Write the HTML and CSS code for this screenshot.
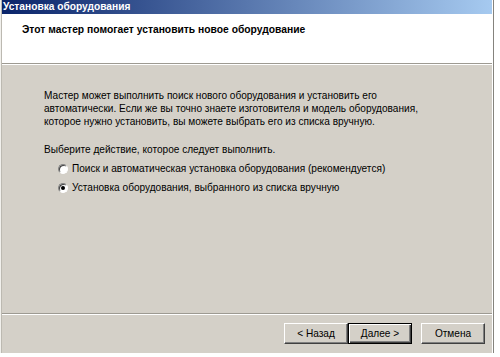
FILE: index.html
```html
<!DOCTYPE html>
<html lang="ru">
<head>
    <meta charset="UTF-8">
    <title>Установка оборудования</title>
    <link rel="stylesheet" href="styles.css">
</head>
<body>
    <div class="dialog">
        <div class="titlebar">Установка оборудования</div>
        <div class="header">
            <h1>Этот мастер помогает установить новое оборудование</h1>
        </div>
        <div class="sep"></div>
        <div class="content">
            <p class="intro">Мастер может выполнить поиск нового оборудования и установить его<br>
                автоматически. Если же вы точно знаете изготовителя и модель оборудования,<br>
                которое нужно установить, вы можете выбрать его из списка вручную.</p>
            <p class="ask">Выберите действие, которое следует выполнить.</p>
            <div class="radio"><span class="circle"></span>Поиск и автоматическая установка оборудования (рекомендуется)</div>
            <div class="radio"><span class="circle checked"></span>Установка оборудования, выбранного из списка вручную</div>
        </div>
        <div class="sep"></div>
        <div class="buttons">
            <button class="btn">&lt; Назад</button>
            <button class="btn default">Далее &gt;</button>
            <button class="btn cancel">Отмена</button>
        </div>
    </div>
</body>
</html>
```

FILE: styles.css
```css
body {
    margin: 0;
    background-color: #ffffff;
    font-family: "Liberation Sans", Arial, sans-serif;
    font-size: 10.1px;
    color: #000000;
}

.dialog {
    width: 494px;
    height: 353px;
    box-sizing: border-box;
    display: flex;
    flex-direction: column;
    background-color: #d4d0c8;
    border-left: 1px solid #f1f0ec;
    border-right: 1px solid #85837d;
    padding: 0 1px;
    box-shadow: inset 1px 0 #bcb9b1, inset -1px 0 #ffffff;
}

.titlebar {
    height: 14px;
    line-height: 14px;
    padding-left: 1px;
    background: linear-gradient(to right, #0a246a, #a6caf0);
    color: #ffffff;
    font-weight: bold;
    font-size: 10.2px;
    white-space: nowrap;
}

.header {
    height: 49px;
    box-sizing: border-box;
    background-color: #ffffff;
    padding: 9px 0 0 20px;
}

.header h1 {
    margin: 0;
    font-size: 10.3px;
    line-height: 13px;
    font-weight: bold;
}

.sep {
    height: 1px;
    background-color: #9d9a92;
    border-bottom: 1px solid #ffffff;
}

.content {
    flex: 1;
    padding: 24px 0 0 42px;
    line-height: 13px;
}

.content p {
    margin: 0;
}

.content .ask {
    margin-top: 15px;
}

.radio {
    display: flex;
    align-items: center;
    margin-top: 6px;
    padding-left: 14px;
    height: 13px;
}

.circle {
    width: 10px;
    height: 10px;
    box-sizing: border-box;
    border-radius: 50%;
    border: 1px solid;
    border-color: #808080 #ffffff #ffffff #808080;
    background-color: #ffffff;
    box-shadow: inset 1px 1px #404040;
    margin-right: 4px;
    display: flex;
    align-items: center;
    justify-content: center;
}

.circle.checked::after {
    content: "";
    width: 4px;
    height: 4px;
    border-radius: 50%;
    background-color: #000000;
}

.buttons {
    height: 38px;
    display: flex;
    justify-content: flex-end;
    align-items: flex-start;
    padding: 8px 7px 0 0;
    box-sizing: border-box;
}

.btn {
    width: 64px;
    height: 21px;
    padding: 0;
    font-family: "Liberation Sans", Arial, sans-serif;
    font-size: 10.1px;
    color: #000000;
    background-color: #d4d0c8;
    border: 1px solid;
    border-color: #ffffff #404040 #404040 #ffffff;
    box-shadow: inset -1px -1px #808080;
}

.btn.default {
    border: 1px solid #000000;
    box-shadow: inset 1px 1px #ffffff, inset -1px -1px #404040, inset -2px -2px #808080;
}

.btn.cancel {
    margin-left: 9px;
}
```
